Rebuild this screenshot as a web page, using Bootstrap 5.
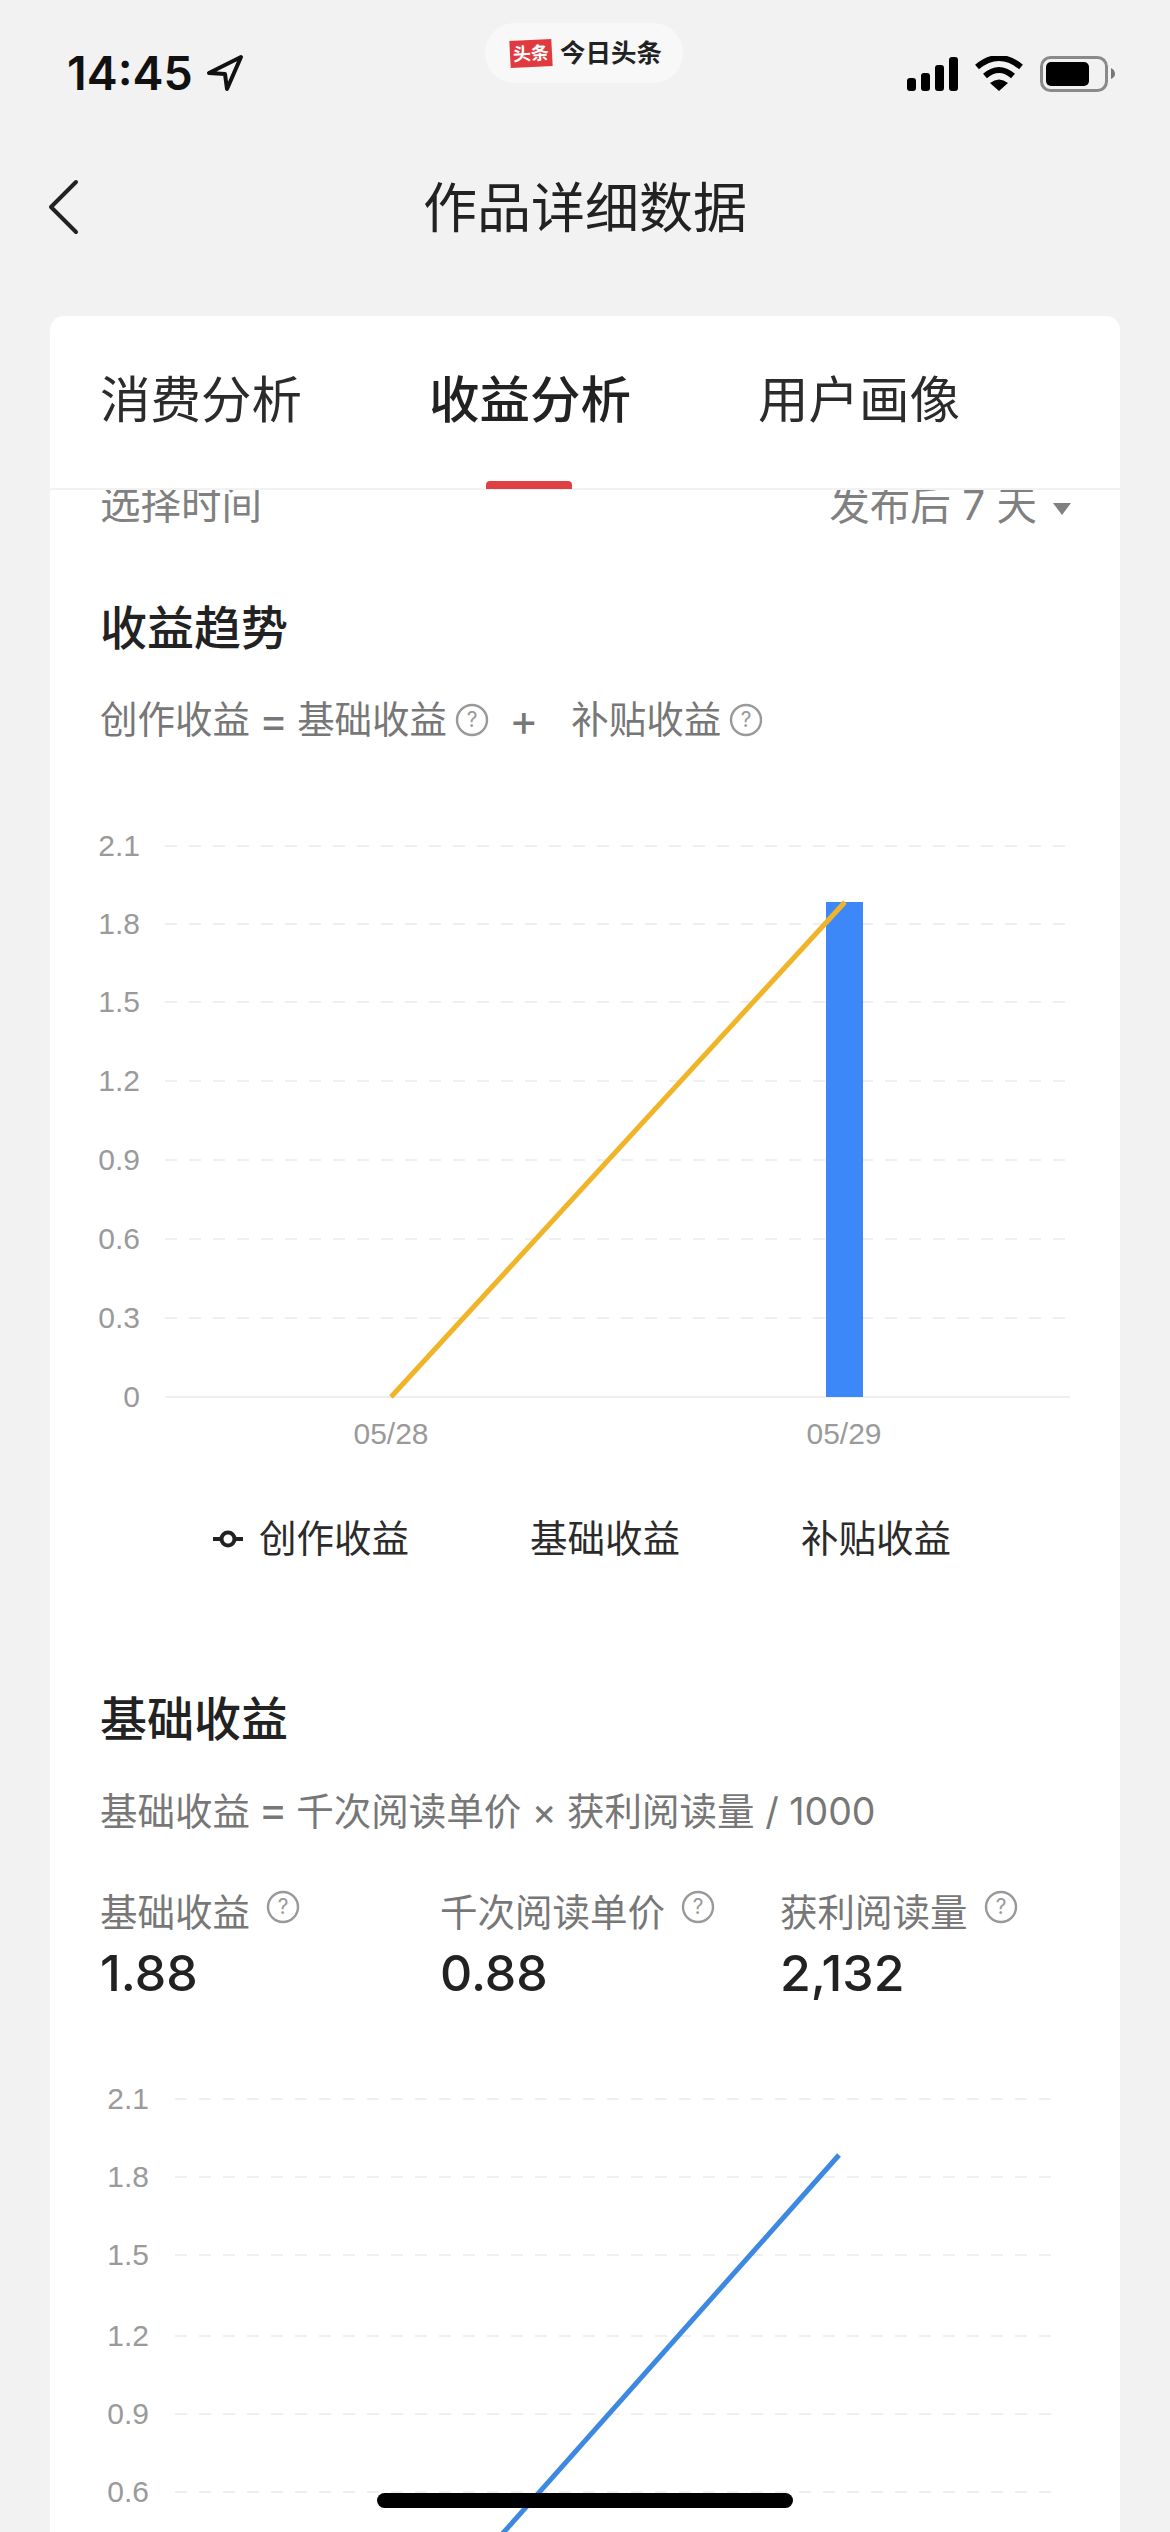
<!DOCTYPE html>
<html lang="zh-CN">
  <head>
    <meta charset="UTF-8" />
    <meta name="viewport" content="width=device-width, initial-scale=1.0" />
    <title>作品详细数据</title>
    <link
      href="https://cdn.jsdelivr.net/npm/bootstrap@5.3.0/dist/css/bootstrap.min.css"
      rel="stylesheet"
    />
    <style>
      html,
      body {
        height: 2532px;
        overflow: hidden;
      }
      body {
        background: #f2f2f2;
        color: #222;
        font-family: "Inter", "Noto Sans CJK SC", sans-serif;
      }
      .status-row {
        height: 110px;
      }
      .status-left {
        width: 485px;
        padding: 49px 0 0 67px;
      }
      .clock {
        font-size: 46.5px;
        font-weight: 600;
        line-height: 48px;
        color: #111;
      }
      .clock-arrow {
        margin: 5px 0 0 13px;
      }
      .app-pill {
        width: 198px;
        height: 60px;
        margin-top: 23px;
        border-radius: 30px;
        background: #f8f8f8;
      }
      .pill-logo {
        width: 42px;
        height: 27px;
        margin-left: 25px;
        background: #e03a3e;
        color: #fff;
        font-size: 18px;
        font-weight: 700;
        line-height: 27px;
        text-align: center;
        transform: rotate(-3deg);
      }
      .pill-name {
        margin-left: 8px;
        font-size: 25.5px;
        font-weight: 700;
        line-height: 30px;
        color: #222;
      }
      .status-right {
        padding: 56px 0 0 224px;
      }
      .title-row {
        height: 206px;
        padding-bottom: 9px;
      }
      .back-btn {
        left: 46px;
        top: 69px;
      }
      .page-title {
        font-size: 54px;
        font-weight: 400;
        line-height: 64px;
        margin: 0;
      }
      .work-card {
        --bs-card-border-radius: 14px;
        --bs-card-inner-border-radius: 14px;
        width: 1070px;
        height: 2300px;
        margin-left: 50px;
        overflow: hidden;
      }
      .tab-bar {
        height: 174px;
        padding: 54px 0 0 50px;
        gap: 127px;
        border-bottom: 2px solid #f2f2f2;
      }
      .tab-item {
        font-size: 50.5px;
        line-height: 60px;
        color: #2b2b2b;
      }
      .tab-on {
        font-weight: 500;
        color: #222;
      }
      .tab-on::after {
        content: "";
        position: absolute;
        left: 57px;
        top: 111px;
        width: 86px;
        height: 8px;
        border-radius: 4px 4px 0 0;
        background: #e04043;
      }
      .range-row {
        height: 36px;
        overflow: hidden;
        padding: 0 49px 0 50px;
        font-size: 40.5px;
        color: #808080;
      }
      .range-row > * {
        line-height: 40px;
        margin-top: -5px;
      }
      .range-caret {
        width: 0;
        height: 0;
        margin: 6px 0 0 16px;
        border-left: 9px solid transparent;
        border-right: 9px solid transparent;
        border-top: 12px solid #808080;
      }
      .chart-sec {
        padding: 0 50px;
      }
      .sec-title {
        font-size: 47px;
        font-weight: 500;
        line-height: 60px;
        margin: 0;
        color: #222;
      }
      .formula {
        font-size: 37.5px;
        line-height: 46px;
        color: #777;
      }
      .formula-top {
        margin-top: 39px;
      }
      .formula-eq {
        margin: 0 9px;
      }
      .formula-plus {
        margin: 0 33px 0 20px;
      }
      .formula-op {
        font-family: "Inter", sans-serif;
        font-size: 44px;
        font-weight: 400;
      }
      .formula-wide {
        margin-top: 40px;
      }
      .formula-sign {
        font-size: 44px;
        line-height: 40px;
        margin: 0 -2px;
      }
      .tip-icon {
        flex: none;
        display: block;
      }
      .tip-icon circle {
        fill: none;
        stroke: #999;
        stroke-width: 2.4;
      }
      .tip-icon text {
        fill: #999;
        font-size: 21px;
        text-anchor: middle;
      }
      .chart-svg {
        display: block;
      }
      .chart-top {
        margin-top: 65px;
      }
      .grid-line {
        stroke: #efefef;
        stroke-width: 2;
        stroke-dasharray: 12 12;
      }
      .axis-num,
      .axis-day {
        fill: #9a9a9a;
        font-family: "Liberation Sans", sans-serif;
        font-size: 30px;
      }
      .axis-num {
        text-anchor: end;
      }
      .axis-day {
        text-anchor: middle;
      }
      .chart-legend {
        margin-top: 58px;
        padding-left: 163px;
        font-size: 37.5px;
        line-height: 46px;
        color: #2b2b2b;
        gap: 121px;
      }
      .sec-top {
        margin-top: 127px;
      }
      .stat-row {
        margin-top: 55px;
        padding-left: 50px;
      }
      .stat-label {
        font-size: 37.5px;
        line-height: 46px;
        color: #777;
      }
      .stat-num {
        margin-top: 7px;
        font-size: 50px;
        font-weight: 500;
        line-height: 60px;
        color: #222;
      }
      .chart-low {
        margin-top: 65px;
      }
      .home-bar {
        position: absolute;
        left: 377px;
        top: 2493px;
        width: 416px;
        height: 15px;
        border-radius: 8px;
        background: #000;
      }
    </style>
  </head>
  <body class="position-relative">
    <!-- status bar -->
    <div class="status-row d-flex">
      <div class="status-left d-flex align-items-start">
        <span class="clock">14:45</span>
        <svg class="clock-arrow" width="38" height="38" viewBox="0 0 38 38">
          <polygon
            points="35,3 3,19 19,20 21,35"
            fill="none"
            stroke="#111"
            stroke-width="4"
            stroke-linejoin="round"
          />
        </svg>
      </div>
      <div class="app-pill d-flex align-items-center">
        <span class="pill-logo">头条</span>
        <span class="pill-name">今日头条</span>
      </div>
      <div class="status-right">
        <svg width="232" height="40" viewBox="0 0 232 40">
          <rect x="0" y="22" width="9" height="13" rx="3" />
          <rect x="14" y="17" width="9" height="18" rx="3" />
          <rect x="28" y="9" width="9" height="26" rx="3" />
          <rect x="42" y="1" width="9" height="34" rx="3" />
          <path
            d="M70 11Q92 -7 114 11M78 20Q92 8 106 20"
            fill="none"
            stroke="#000"
            stroke-width="6"
          />
          <path d="M83 27Q92 20 101 27L92 35Z" />
          <rect
            x="134.5"
            y="1.5"
            width="65"
            height="33"
            rx="9"
            fill="none"
            stroke="#8a8a8a"
            stroke-width="3"
          />
          <rect x="139" y="6" width="43" height="24" rx="5" />
          <path d="M204 12Q208 14 208 18Q208 21 204 23Z" fill="#777" />
        </svg>
      </div>
    </div>

    <!-- title -->
    <div class="title-row position-relative d-flex align-items-center justify-content-center">
      <svg class="back-btn position-absolute" width="34" height="56" viewBox="0 0 34 56">
        <path d="M30 3L5 28L30 53" fill="none" stroke="#222" stroke-width="4" stroke-linecap="round" stroke-linejoin="round" />
      </svg>
      <h1 class="page-title">作品详细数据</h1>
    </div>

    <div class="work-card card border-0">
      <div class="tab-bar d-flex">
        <div class="tab-item">消费分析</div>
        <div class="tab-item tab-on position-relative">收益分析</div>
        <div class="tab-item">用户画像</div>
      </div>
      <div class="range-row d-flex justify-content-between">
        <span>选择时间</span>
        <div class="d-flex align-items-center">
          <span>发布后 7 天</span><span class="range-caret"></span>
        </div>
      </div>

      <!-- 收益趋势 -->
      <div class="chart-sec mt-5 pt-4">
        <h2 class="sec-title">收益趋势</h2>
        <div class="formula formula-top d-flex align-items-center">
          <span>创作收益</span>
          <span class="formula-op formula-eq">=</span>
          <span>基础收益</span>
          <svg class="tip-icon ms-2" width="34" height="34" viewBox="0 0 34 34">
            <circle cx="17" cy="17" r="15" /><text x="17" y="24">?</text>
          </svg>
          <span class="formula-op formula-plus">+</span>
          <span>补贴收益</span>
          <svg class="tip-icon ms-2" width="34" height="34" viewBox="0 0 34 34">
            <circle cx="17" cy="17" r="15" /><text x="17" y="24">?</text>
          </svg>
        </div>
      </div>
      <svg class="chart-svg chart-top" width="1070" height="650" viewBox="50 810 1070 650">
        <g id="chart-a"></g>
        <rect x="826" y="904" width="37" height="495" fill="#3d88f8" />
        <line x1="391" y1="1399" x2="845" y2="904" stroke="#f0b429" stroke-width="5" />
        <text class="axis-day" x="391" y="1446">05/28</text>
        <text class="axis-day" x="844" y="1446">05/29</text>
      </svg>
      <div class="chart-legend d-flex align-items-center">
        <div class="d-flex align-items-center">
          <svg class="me-3" width="30" height="20" viewBox="0 0 30 20">
            <path d="M0 10H30" stroke="#222" stroke-width="4" />
            <circle cx="15" cy="10" r="6.5" fill="#fff" stroke="#222" stroke-width="4" />
          </svg>
          <span>创作收益</span>
        </div>
        <span>基础收益</span>
        <span>补贴收益</span>
      </div>

      <!-- 基础收益 -->
      <div class="chart-sec sec-top">
        <h2 class="sec-title">基础收益</h2>
        <div class="formula formula-wide">基础收益 <span class="formula-sign">=</span> 千次阅读单价 × 获利阅读量 / 1000</div>
      </div>
      <div class="stat-row row g-0">
        <div class="col-4">
          <div class="stat-label d-flex">
            <span>基础收益</span>
            <svg class="tip-icon ms-3" width="34" height="34" viewBox="0 0 34 34">
              <circle cx="17" cy="17" r="15" /><text x="17" y="24">?</text>
            </svg>
          </div>
          <div class="stat-num">1.88</div>
        </div>
        <div class="col-4">
          <div class="stat-label d-flex">
            <span>千次阅读单价</span>
            <svg class="tip-icon ms-3" width="34" height="34" viewBox="0 0 34 34">
              <circle cx="17" cy="17" r="15" /><text x="17" y="24">?</text>
            </svg>
          </div>
          <div class="stat-num">0.88</div>
        </div>
        <div class="col-4">
          <div class="stat-label d-flex">
            <span>获利阅读量</span>
            <svg class="tip-icon ms-3" width="34" height="34" viewBox="0 0 34 34">
              <circle cx="17" cy="17" r="15" /><text x="17" y="24">?</text>
            </svg>
          </div>
          <div class="stat-num">2,132</div>
        </div>
      </div>
      <svg class="chart-svg chart-low" width="1070" height="500" viewBox="50 2070 1070 500">
        <g id="chart-b"></g>
        <line x1="839" y1="2157" x2="472" y2="2570" stroke="#3d88e0" stroke-width="5" />
      </svg>
    </div>

    <div class="home-bar"></div>

    <script>
      // dashed grid and axis numbers for both charts
      const SVG_NS = "http://www.w3.org/2000/svg";
      function drawGrid(id, ticks, x1, x2, labelX) {
        const group = document.getElementById(id);
        ticks.forEach(([label, y]) => {
          const line = document.createElementNS(SVG_NS, "line");
          line.setAttribute("x1", x1);
          line.setAttribute("x2", x2);
          line.setAttribute("y1", y);
          line.setAttribute("y2", y);
          line.setAttribute("class", "grid-line");
          if (label === "0") {
            line.style.strokeDasharray = "none";
          }
          group.appendChild(line);
          const text = document.createElementNS(SVG_NS, "text");
          text.setAttribute("x", labelX);
          text.setAttribute("y", y + 10);
          text.setAttribute("class", "axis-num");
          text.textContent = label;
          group.appendChild(text);
        });
      }
      drawGrid(
        "chart-a",
        [["2.1", 848], ["1.8", 926], ["1.5", 1004], ["1.2", 1083], ["0.9", 1162], ["0.6", 1241], ["0.3", 1320], ["0", 1399]],
        165, 1070, 140
      );
      drawGrid(
        "chart-b",
        [["2.1", 2101], ["1.8", 2179], ["1.5", 2257], ["1.2", 2338], ["0.9", 2416], ["0.6", 2494]],
        175, 1052, 149
      );
    </script>
    <script src="https://cdn.jsdelivr.net/npm/bootstrap@5.3.0/dist/js/bootstrap.bundle.min.js"></script>
  </body>
</html>
